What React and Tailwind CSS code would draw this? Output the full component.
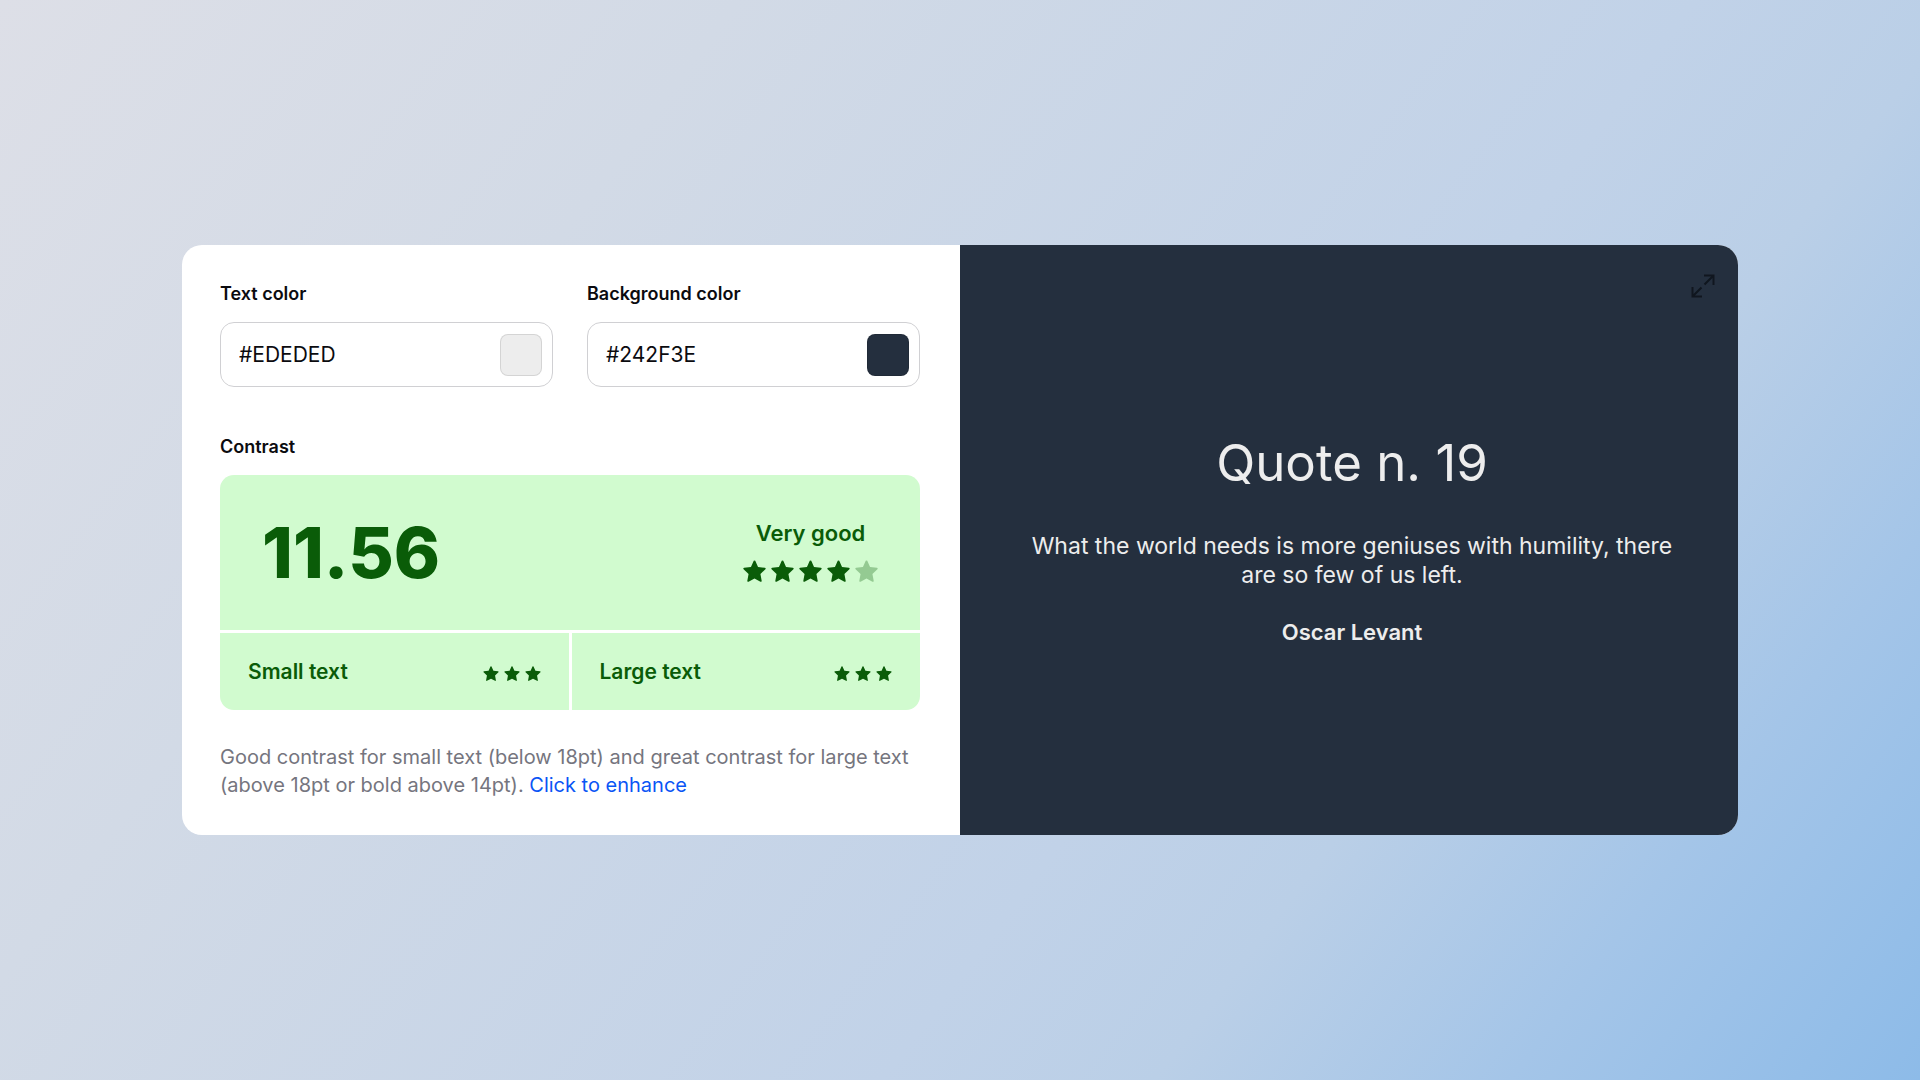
import { useState } from 'react'

const RATINGS = [
  { id: 'small', label: 'Small text', stars: 3 },
  { id: 'large', label: 'Large text', stars: 3 },
]

function Star({ className }) {
  return (
    <svg viewBox="0 0 24 23" fill="currentColor" className={className} aria-hidden="true">
      <path d="M11.2.9a.9.9 0 0 1 1.6 0l2.9 6.3 7.2 1a.8.8 0 0 1 .5 1.4l-5.2 5 1.3 7.1a.9.9 0 0 1-1.3 1L12 19.4l-6.2 3.3a.9.9 0 0 1-1.3-1l1.3-7.1-5.2-5a.8.8 0 0 1 .5-1.4l7.2-1z" />
    </svg>
  )
}

function ColorField({ id, label, value, onChange }) {
  return (
    <div className="flex-1 min-w-0">
      <label htmlFor={id} className="block text-lg leading-6 font-semibold text-[#0b0b0f]">{label}</label>
      <div className="mt-4 h-[65px] flex items-center pl-[18px] pr-2.5 rounded-[14px] border border-[#d0d0d3]">
        <input
          id={id}
          value={value}
          onChange={e => onChange(e.target.value)}
          className="flex-1 min-w-0 text-[21px] leading-7 text-[#0b0b0f] outline-none"
        />
        <button
          type="button"
          aria-label={`Pick ${label.toLowerCase()}`}
          className="w-[42px] h-[42px] flex-shrink-0 rounded-lg border border-black/10"
          style={{ backgroundColor: value }}
        />
      </div>
    </div>
  )
}

export default function App() {
  const [textColor, setTextColor] = useState('#EDEDED')
  const [bgColor, setBgColor]     = useState('#242F3E')

  return (
    <div className="min-h-screen flex items-center justify-center px-8 font-['Inter',sans-serif] bg-[linear-gradient(127deg,#dddfe7_0%,#d2dae6_27%,#c1d2e8_62%,#bacfe7_72%,#a4c5e8_85%,#8dbbe8_100%)]">
      <main className="w-full max-w-[1556px] grid grid-cols-2 rounded-[20px] overflow-hidden bg-white">
        <section className="pt-[37px] pb-9 pl-[38px] pr-10">
          <div className="flex gap-[34px]">
            <ColorField id="text-color" label="Text color" value={textColor} onChange={setTextColor} />
            <ColorField id="bg-color" label="Background color" value={bgColor} onChange={setBgColor} />
          </div>

          <h2 className="mt-12 text-lg leading-6 font-semibold text-[#0b0b0f]">Contrast</h2>

          {/* Score card */}
          <div className="mt-4 grid grid-cols-2 gap-[3px] rounded-[14px] overflow-hidden text-[#0a5c08]">
            <div className="col-span-2 h-[155px] flex items-center justify-between px-[42px] bg-[#d1fbcf]">
              <span className="text-[70px] font-extrabold">11.56</span>
              <div className="flex flex-col items-center gap-[13px] pb-1">
                <span className="text-[22px] leading-7 font-semibold">Very good</span>
                <div className="flex gap-[5px]">
                  {[1, 2, 3, 4, 5].map(n => (
                    <Star key={n} className={n > 4 ? 'w-[23px] h-[22px] opacity-30' : 'w-[23px] h-[22px]'} />
                  ))}
                </div>
              </div>
            </div>
            {RATINGS.map(({ id, label, stars }) => (
              <div key={id} className="h-[77px] flex items-center justify-between px-7 bg-[#d1fbcf]">
                <span className="text-[21px] leading-7 font-semibold">{label}</span>
                <div className="flex gap-[5px] pt-1">
                  {Array(stars).fill(0).map((_, i) => <Star key={i} className="w-4 h-[15px]" />)}
                </div>
              </div>
            ))}
          </div>

          <p className="mt-[33px] text-xl leading-7 text-[#75757e]">
            Good contrast for small text (below 18pt) and great contrast for large text (above 18pt or bold above 14pt).{' '}
            <a href="#enhance" className="text-[#0a55f5]">Click to enhance</a>
          </p>
        </section>

        {/* Preview */}
        <section
          className="relative flex flex-col items-center justify-center pl-[70px] pr-16 text-center"
          style={{ backgroundColor: bgColor, color: textColor }}
        >
          <button type="button" aria-label="Full screen" className="absolute top-[29px] right-[23px] text-[#10161f]">
            <svg viewBox="0 0 24 24" className="w-6 h-6" fill="none" stroke="currentColor" strokeWidth="2">
              <path d="M13 1.5h9.5V11M22.5 1.5l-9 9M11 22.5H1.5V13M1.5 22.5l9-9" />
            </svg>
          </button>
          <h1 className="text-[51px] leading-[60px]">Quote n. 19</h1>
          <p className="mt-[39px] text-[23px] leading-[29px]">
            What the world needs is more geniuses with humility, there are so few of us left.
          </p>
          <p className="mt-7 text-[22px] leading-[29px] font-semibold">Oscar Levant</p>
        </section>
      </main>
    </div>
  )
}
